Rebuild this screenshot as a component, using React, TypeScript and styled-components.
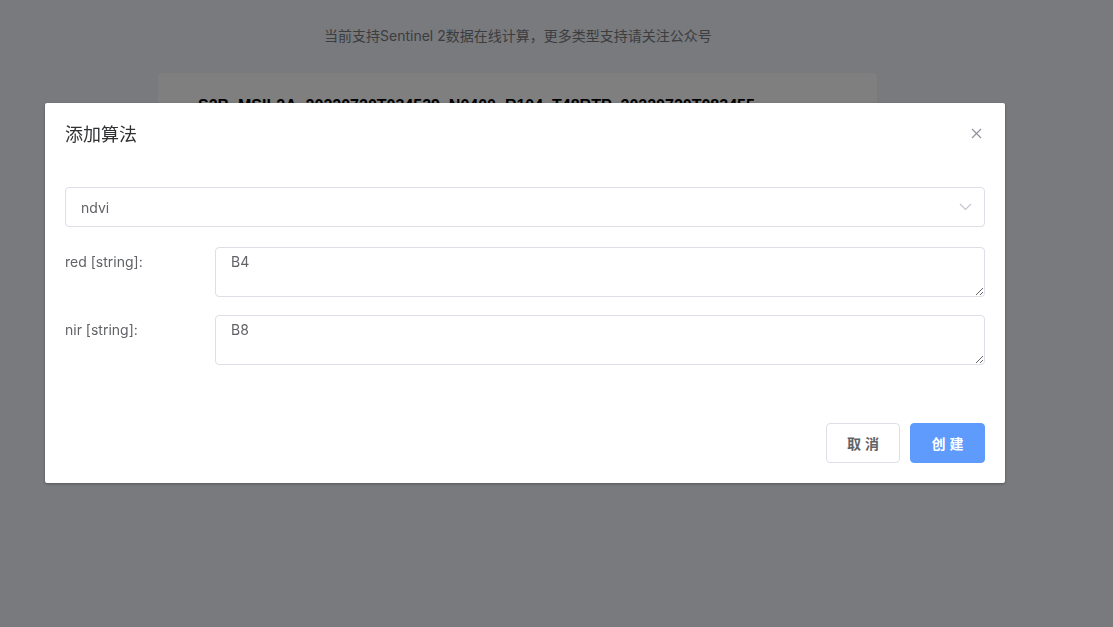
import styled, { createGlobalStyle } from 'styled-components'

const GlobalStyle = createGlobalStyle`
  html, body {
    margin: 0;
    padding: 0;
    height: 100%;
    background: #f2f4fc;
    font-family: Inter, "Noto Sans CJK SC", sans-serif;
  }
`

const Page = styled.div`
  height: 627px;
  overflow: hidden;
  padding-top: 26px;
  box-sizing: border-box;
`

const Notice = styled.p`
  margin: 0 0 27px 0;
  padding-left: 324px;
  font-size: 14px;
  color: #787a7e;
  line-height: 20px;
`

const Card = styled.div`
  margin-left: 158px;
  width: 719px;
  height: 400px;
  background: #fff;
  border-radius: 4px;
  padding: 24px 40px;
  box-sizing: border-box;
`

const FileName = styled.div`
  font-family: "Liberation Sans", Arial, sans-serif;
  font-weight: bold;
  font-size: 16px;
  color: #000;
`

const Overlay = styled.div`
  position: fixed;
  inset: 0;
  background: rgba(0, 0, 0, 0.5);
`

const Modal = styled.div`
  position: fixed;
  left: 45px;
  top: 103px;
  width: 960px;
  background: #fff;
  border-radius: 2px;
  box-shadow: 0 1px 3px rgba(0, 0, 0, 0.3);
`

const Header = styled.div`
  display: flex;
  align-items: center;
  justify-content: space-between;
  padding: 20px 20px 10px;
`

const Title = styled.h2`
  margin: 0;
  font-size: 18px;
  font-weight: normal;
  color: #303133;
  line-height: 24px;
`

const CloseButton = styled.button`
  background: none;
  border: none;
  padding: 0;
  width: 16px;
  height: 16px;
  display: flex;
  align-items: center;
  justify-content: center;
  cursor: pointer;
  margin-right: 1px;
  margin-top: -4px;
`

const Body = styled.div`
  padding: 30px 20px 0;
`

const SelectBox = styled.div`
  height: 40px;
  border: 1px solid #dcdfe6;
  border-radius: 4px;
  box-sizing: border-box;
  display: flex;
  align-items: center;
  justify-content: space-between;
  padding: 0 12px 0 15px;
  margin-bottom: 20px;
  font-size: 14px;
  color: #606266;
`

const FormRow = styled.div`
  display: flex;
  align-items: flex-start;
  margin-bottom: 18px;
`

const Label = styled.label`
  width: 150px;
  flex-shrink: 0;
  font-size: 14px;
  color: #606266;
  line-height: 20px;
  padding-top: 5px;
`

const TextArea = styled.textarea`
  flex: 1;
  height: 50px;
  box-sizing: border-box;
  border: 1px solid #dcdfe6;
  border-radius: 4px;
  padding: 4px 15px;
  font-family: Inter, "Noto Sans CJK SC", sans-serif;
  font-size: 14px;
  line-height: 20px;
  color: #606266;
  outline: none;
`

const Footer = styled.div`
  display: flex;
  justify-content: flex-end;
  gap: 10px;
  padding: 40px 20px 20px;
`

const Button = styled.button<{ $primary?: boolean }>`
  height: 40px;
  width: ${p => (p.$primary ? '75px' : '74px')};
  border-radius: 4px;
  border: 1px solid ${p => (p.$primary ? '#5f9afd' : '#dcdfe6')};
  background: ${p => (p.$primary ? '#5f9afd' : '#fff')};
  color: ${p => (p.$primary ? '#fff' : '#606266')};
  font-family: "Noto Sans CJK SC", sans-serif;
  font-size: 14px;
  font-weight: bold;
  letter-spacing: 4px;
  padding: 0 0 0 4px;
  cursor: pointer;
`

export default function App() {
  return (
    <>
      <GlobalStyle />
      <Page>
        <Notice>当前支持Sentinel 2数据在线计算，更多类型支持请关注公众号</Notice>
        <Card>
          <FileName>S2B_MSIL2A_20220720T034539_N0400_R104_T48RTP_20220720T083455</FileName>
        </Card>
      </Page>
      <Overlay />
      <Modal>
        <Header>
          <Title>添加算法</Title>
          <CloseButton aria-label="close">
            <svg width="11" height="11" viewBox="0 0 11 11">
              <path d="M1 1L10 10M10 1L1 10" stroke="#909399" strokeWidth="1.2" />
            </svg>
          </CloseButton>
        </Header>
        <Body>
          <SelectBox>
            <span>ndvi</span>
            <svg width="13" height="8" viewBox="0 0 13 8">
              <path d="M1 1L6.5 6.5L12 1" stroke="#c0c4cc" strokeWidth="1.1" fill="none" />
            </svg>
          </SelectBox>
          <FormRow>
            <Label>red [string]:</Label>
            <TextArea defaultValue="B4" />
          </FormRow>
          <FormRow>
            <Label>nir [string]:</Label>
            <TextArea defaultValue="B8" />
          </FormRow>
        </Body>
        <Footer>
          <Button>取消</Button>
          <Button $primary>创建</Button>
        </Footer>
      </Modal>
    </>
  )
}
